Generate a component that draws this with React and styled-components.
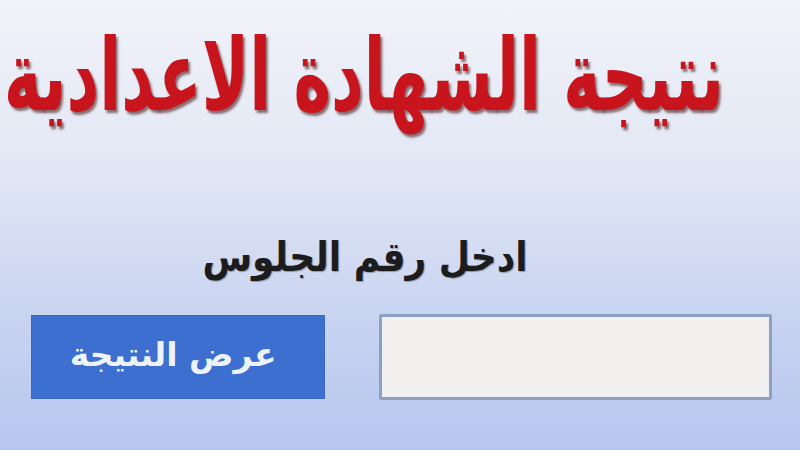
import React from "react";
import styled, { createGlobalStyle } from "styled-components";

const Global = createGlobalStyle`
  html, body { margin: 0; padding: 0; }
  body { width: 800px; height: 450px; overflow: hidden; }
`;

const Page = styled.div`
  width: 800px;
  height: 450px;
  box-sizing: border-box;
  direction: rtl;
  font-family: "DejaVu Sans", "Noto Sans", sans-serif;
  background: linear-gradient(180deg, #f1f3f9 0%, #e3e8f5 35%, #c9d4f1 70%, #b6c6ee 100%);
  display: flex;
  flex-direction: column;
`;

const Title = styled.h1`
  margin: 0;
  padding: 22px 76px 0 0;
  font-family: "DejaVu Sans Condensed", "DejaVu Sans", sans-serif;
  font-stretch: condensed;
  font-size: 71px;
  line-height: 100px;
  font-weight: bold;
  color: #c8141c;
  text-shadow: 2px 2px 2px rgba(60, 0, 0, 0.55);
  white-space: nowrap;
  transform: scaleY(1.4);
  transform-origin: right center;
`;

const Label = styled.div`
  margin-top: 110px;
  padding-right: 70px;
  text-align: center;
  font-size: 36px;
  line-height: 50px;
  font-weight: bold;
  color: #1c1c1c;
  text-shadow: 1px 1px 1px rgba(0, 0, 0, 0.3);
  transform: scaleY(1.15);
`;

const FormRow = styled.div`
  margin-top: 32px;
  display: flex;
  align-items: center;
  gap: 54px;
  padding: 0 28px 0 31px;
`;

const Field = styled.input`
  width: 394px;
  height: 86px;
  box-sizing: border-box;
  border: 3px solid #8e9fc0;
  border-radius: 2px;
  background: #f1f0ee;
  outline: none;
`;

const Button = styled.button`
  width: 295px;
  height: 84px;
  box-sizing: border-box;
  border: 1px solid #3a68c0;
  background: #3c6fd0;
  color: #eef3fb;
  font-family: "DejaVu Sans", sans-serif;
  font-size: 33px;
  font-weight: bold;
  padding: 0 10px 6px 0;
  cursor: pointer;
`;

export default function App() {
  return (
    <>
      <Global />
      <Page>
        <Title>نتيجة الشهادة الاعدادية</Title>
        <Label>ادخل رقم الجلوس</Label>
        <FormRow>
          <Field type="text" />
          <Button>عرض النتيجة</Button>
        </FormRow>
      </Page>
    </>
  );
}
